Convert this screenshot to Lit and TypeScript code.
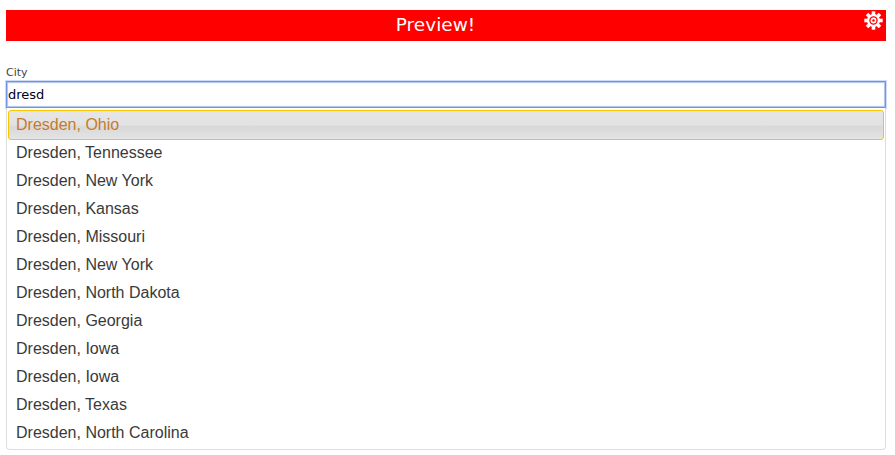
import { LitElement, html, css, svg } from "lit";
import { customElement } from "lit/decorators.js";

const cities = ["Ohio","Tennessee","New York","Kansas","Missouri","New York","North Dakota","Georgia","Iowa","Iowa","Texas","North Carolina"];

@customElement("app-root")
export class AppRoot extends LitElement {
  static styles = css`
    :host { display: block; padding: 10px 9px 0 6px; font-family: "Liberation Sans", Arial, sans-serif; }
    .bar { position: relative; box-sizing: border-box; height: 31px; padding: 0 21px 2px 0; background: #f00; color: #fff; display: flex; align-items: center; justify-content: center;
      font: 18.5px "DejaVu Sans", sans-serif; }
    .gear { position: absolute; right: 3px; top: 1px; width: 19px; height: 19px; }
    .field { margin-top: 25px; }
    label { display: block; font: 11px/14px "DejaVu Sans", sans-serif; color: #444; height: 15px; }
    .input { box-sizing: border-box; height: 27px; border: 1px solid #6f93e6; box-shadow: 0 0 0 1px rgba(120,155,225,.35), 0 0 1px 1px rgba(120,155,225,.6) inset;
      font: 13px/25px "DejaVu Sans", sans-serif; color: #000022; padding-left: 1px; background: #fff; }
    .menu { box-sizing: border-box; height: 342px; border: 1px solid #ddd; border-top: 0; border-radius: 0 0 4px 4px;
      background: #fff; padding: 2px 1px 0; }
    .row { box-sizing: border-box; height: 28px; font-size: 16px; line-height: 28px; color: #3a3a3a; padding-left: 8px; }
    .row.active { height: 30px; line-height: 27px; margin-bottom: -1px; padding-left: 7px; border: 1px solid #f7c600; border-radius: 3px; color: #c77a2c;
      background: linear-gradient(#e6e6e6 0, #e2e2e2 50%, #d8d8d8 56%, #e4e4e4 100%); }
  `;
  render() {
    return html`
      <div class="bar"><span>Preview!</span>
        <svg class="gear" viewBox="0 0 19 19">
          <circle cx="9.5" cy="9.5" r="6.5" fill="#fff"/>
          <circle cx="9.5" cy="9.5" r="4.2" fill="#f00"/>
          <circle cx="9.5" cy="9.5" r="2.9" fill="#fff"/>
          <circle cx="9.5" cy="9.5" r="1.2" fill="#f00"/>
          ${[0,45,90,135,180,225,270,315].map(a => svg`<rect x="7.7" y="0.3" width="3.6" height="4" fill="#fff" transform="rotate(${a} 9.5 9.5)"/>`)}
        </svg>
      </div>
      <div class="field">
        <label>City</label>
        <div class="input">dresd</div>
        <div class="menu">
          ${cities.map((c, i) => html`<div class="row ${i === 0 ? "active" : ""}">Dresden, ${c}</div>`)}
        </div>
      </div>`;
  }
}
